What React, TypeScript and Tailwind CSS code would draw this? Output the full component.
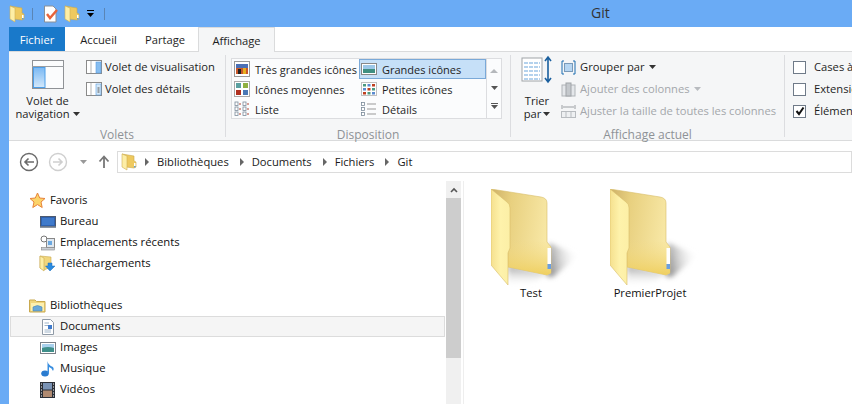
import type { ReactNode } from 'react';

const FONT = { fontFamily: '"Open Sans", "Noto Sans", sans-serif' };

function SmallFolder({ className = '' }: { className?: string }) {
  return (
    <svg width="16" height="18" viewBox="0 0 16 18" className={className}>
      <path d="M1 1 L13 3 V8 L15 9 V14 L13 15 L5 14 V3 Z" fill="#eec95f" stroke="#c9a94f" strokeWidth="0.6" />
      <path d="M1 1 L6 3 V17 L1 14 Z" fill="#fdeea6" stroke="#d0b055" strokeWidth="0.6" />
      <rect x="13" y="10" width="1.5" height="3" fill="#fff" />
      <rect x="13" y="13" width="1.5" height="1.4" fill="#5a9de0" />
    </svg>
  );
}

function BigFolder({ id }: { id: string }) {
  return (
    <svg width="90" height="100" viewBox="0 0 90 100">
      <defs>
        <linearGradient id={`${id}-back`} x1="0" x2="1" y1="0" y2="0.2">
          <stop offset="0" stopColor="#cdb068" />
          <stop offset="0.35" stopColor="#e8d07f" />
          <stop offset="1" stopColor="#f8e8a6" />
        </linearGradient>
        <linearGradient id={`${id}-bottom`} x1="0" x2="0" y1="0" y2="1">
          <stop offset="0" stopColor="#f3dc8a" stopOpacity="0" />
          <stop offset="1" stopColor="#efcf5f" />
        </linearGradient>
        <linearGradient id={`${id}-flap`} x1="0" x2="1" y1="0" y2="0">
          <stop offset="0" stopColor="#f5e08e" />
          <stop offset="0.5" stopColor="#fef2ab" />
          <stop offset="1" stopColor="#fcefa6" />
        </linearGradient>
        <linearGradient id={`${id}-shadow`} gradientUnits="userSpaceOnUse" x1="58" y1="70" x2="88" y2="64">
          <stop offset="0" stopColor="#808080" stopOpacity="0.8" />
          <stop offset="1" stopColor="#ffffff" stopOpacity="0" />
        </linearGradient>
        <linearGradient id={`${id}-under`} gradientUnits="userSpaceOnUse" x1="30" y1="78" x2="30" y2="98">
          <stop offset="0" stopColor="#8a8a8a" stopOpacity="0.7" />
          <stop offset="1" stopColor="#ffffff" stopOpacity="0" />
        </linearGradient>
        <filter id={`${id}-blur`} x="-30%" y="-30%" width="160%" height="160%">
          <feGaussianBlur stdDeviation="2.5" />
        </filter>
      </defs>
      <g filter={`url(#${id}-blur)`}>
        <path d="M58 54 L88 66 L62 88 L56 88 Z" fill={`url(#${id}-shadow)`} />
        <path d="M17 76 L58 84 L42 93 L17 98 Z" fill={`url(#${id}-under)`} />
      </g>
      <path d="M0 0 L50 8 Q56 9 56 14 V53 L60 58 V84 L56 86 L17 78 V16 Z" fill={`url(#${id}-back)`} stroke="#d9bd6a" strokeWidth="0.6" />
      <path d="M17 50 L56 53 L60 58 V84 L56 86 L17 78 Z" fill={`url(#${id}-bottom)`} />
      <path d="M0 0 L16 13 Q19 15 19 19 V59 L17 64 V96 L0 76 Z" fill={`url(#${id}-flap)`} stroke="#d9bd6a" strokeWidth="0.6" />
      <rect x="56.5" y="59" width="3.5" height="16" fill="#ffffff" />
      <rect x="56.5" y="75" width="3.5" height="5" fill="#6a9fe0" />
    </svg>
  );
}

function Caret({ color = '#333' }: { color?: string }) {
  return (
    <svg width="7" height="4" viewBox="0 0 7 4" className="inline-block shrink-0">
      <path d="M0 0 H7 L3.5 4 Z" fill={color} />
    </svg>
  );
}

function PaneIcon({ details }: { details?: boolean }) {
  return (
    <svg width="16" height="16" viewBox="0 0 16 16">
      <rect x="0.5" y="1.5" width="15" height="13" fill="#fff" stroke="#8a8a8a" />
      <line x1="5" y1="2" x2="5" y2="14" stroke="#b5b5b5" />
      <rect x="10" y="3" width="5" height="11" fill={details ? '#d5e8f8' : '#86bdf0'} stroke="#5a9de0" strokeWidth="0.6" />
      {details && <path d="M11.5 7H13.5M11.5 9H13.5M11.5 11H13.5" stroke="#555" />}
    </svg>
  );
}

// layout gallery thumbs
function GalleryIcon({ kind }: { kind: string }) {
  if (kind === 'xl')
    return (
      <svg width="16" height="16" viewBox="0 0 16 16">
        <rect x="0.5" y="0.5" width="15" height="15" fill="#fff" stroke="#999" />
        <rect x="2" y="3" width="12" height="4" fill="#4a6fb5" />
        <rect x="2" y="7" width="12" height="6" fill="#c9582a" />
        <rect x="4" y="8" width="3" height="5" fill="#222" />
        <rect x="9" y="7" width="3" height="6" fill="#e8b020" />
      </svg>
    );
  if (kind === 'l')
    return (
      <svg width="16" height="16" viewBox="0 0 16 16">
        <rect x="0.5" y="2.5" width="15" height="11" fill="#fff" stroke="#888" />
        <rect x="2" y="4" width="12" height="4" fill="#9cc7e8" />
        <rect x="2" y="8" width="12" height="4" fill="#3f8f82" />
      </svg>
    );
  if (kind === 'm')
    return (
      <svg width="16" height="16" viewBox="0 0 16 16">
        <rect x="0.5" y="0.5" width="15" height="15" fill="#fff" stroke="#aaa" />
        <rect x="2" y="2" width="5" height="5" fill="#5aa0a0" />
        <rect x="9" y="2" width="5" height="5" fill="#8fb040" />
        <rect x="2" y="9" width="5" height="5" fill="#b03020" />
        <rect x="9" y="9" width="5" height="5" fill="#4a78b5" />
      </svg>
    );
  if (kind === 's')
    return (
      <svg width="16" height="16" viewBox="0 0 16 16">
        <rect x="0.5" y="1.5" width="15" height="13" fill="#fff" stroke="#c0c0c0" />
        {[2, 6.5, 11].map((x, i) =>
          [3, 7, 11].map((y, j) => (
            <rect key={`${i}${j}`} x={x} y={y} width="3" height="2.5" fill={['#4a9a80', '#5a8ad0', '#c04020'][(i + j) % 3]} />
          )),
        )}
      </svg>
    );
  if (kind === 'd')
    return (
      <svg width="16" height="16" viewBox="0 0 16 16">
        {[1.5, 6.5, 11.5].map((y) => (
          <rect key={y} x="0.5" y={y} width="3" height="3" fill="#fff" stroke="#7a8a9a" strokeWidth="0.8" />
        ))}
        <path d="M6 3H15M6 8H15M6 13H15" stroke="#999" />
      </svg>
    );
  return (
    <svg width="16" height="16" viewBox="0 0 16 16">
      {[1, 9].map((x) =>
        [1, 6, 11].map((y) => (
          <rect key={`${x}${y}`} x={x} y={y} width="3" height="3.4" fill="#fff" stroke="#7a8a9a" strokeWidth="0.8" />
        )),
      )}
      <path d="M5 3H7M13 3H15M5 8H7M13 8H15M5 13H7M13 13H15" stroke="#b04030" />
    </svg>
  );
}

function GalleryItem({ kind, label, active }: { kind: string; label: string; active?: boolean }) {
  return (
    <div className={`flex h-[20px] items-center gap-[5px] ${active ? 'border border-[#7aa9d8] bg-[#c6e0f8] pl-[1px]' : 'pl-[2px]'}`}>
      <GalleryIcon kind={kind} />
      <span className="whitespace-nowrap">{label}</span>
    </div>
  );
}

function RibbonGroup({ width, label, children }: { width: string; label: string; children: ReactNode }) {
  return (
    <div className={`flex h-full shrink-0 flex-col border-r border-[#dcdde0] ${width}`}>
      <div className="h-[73px] shrink-0">{children}</div>
      <div className="text-center text-[12px] leading-[14px] text-[#8e9296]">{label}</div>
    </div>
  );
}

function Check({ checked, label }: { checked?: boolean; label: string }) {
  return (
    <div className="flex h-[22px] items-center gap-[8px]">
      <span className="flex h-[13px] w-[13px] shrink-0 items-center justify-center border border-[#6f7a88] bg-white">
        {checked && (
          <svg width="10" height="10" viewBox="0 0 10 10">
            <path d="M1.5 5 L4 8 L8.5 1.5" fill="none" stroke="#111" strokeWidth="2" />
          </svg>
        )}
      </span>
      <span className="whitespace-nowrap">{label}</span>
    </div>
  );
}

function Crumb({ label }: { label: string }) {
  return (
    <>
      <span className="ml-[11px] h-0 w-0 border-y-[4px] border-l-[4px] border-y-transparent border-l-[#666]" />
      <span className="ml-[8px] whitespace-nowrap">{label}</span>
    </>
  );
}

function NavIcon({ kind }: { kind: string }) {
  switch (kind) {
    case 'star':
      return (
        <svg width="17" height="17" viewBox="0 0 17 17">
          <path d="M8.5 1 L10.7 6 L16 6.5 L12 10 L13.2 15.5 L8.5 12.6 L3.8 15.5 L5 10 L1 6.5 L6.3 6 Z" fill="#fbd46a" stroke="#e8833a" />
        </svg>
      );
    case 'desktop':
      return (
        <svg width="16" height="14" viewBox="0 0 16 14">
          <rect x="0.5" y="1.5" width="15" height="10" fill="#2f62b0" stroke="#4d5a70" />
          <rect x="2" y="3" width="12" height="7" fill="#3f7acb" />
          <rect x="0" y="11.5" width="16" height="1.5" fill="#8a94a2" />
        </svg>
      );
    case 'recent':
      return (
        <svg width="16" height="16" viewBox="0 0 16 16">
          <circle cx="4" cy="4" r="3" fill="#fff" stroke="#777" />
          <rect x="6.5" y="3.5" width="8" height="9" fill="#dfe7ef" stroke="#888" />
          <rect x="8" y="6" width="4" height="4" fill="#6aa8e0" />
          <rect x="1.5" y="12.5" width="13" height="2.5" fill="#c9ced4" stroke="#888" strokeWidth="0.6" />
        </svg>
      );
    case 'download':
      return (
        <svg width="17" height="17" viewBox="0 0 17 17">
          <path d="M1 1 L12 2 V12 L5 15 L1 13 Z" fill="#f1d67c" stroke="#c9a94f" strokeWidth="0.6" />
          <path d="M1 1 L5 3 V16 L1 13 Z" fill="#fdeea6" stroke="#c9a94f" strokeWidth="0.6" />
          <path d="M9 8 H13 V11 H16 L11 16 L6.5 11 H9 Z" fill="#2a8ae0" stroke="#1c6cb8" strokeWidth="0.5" />
        </svg>
      );
    case 'library':
      return (
        <svg width="17" height="15" viewBox="0 0 17 15">
          <path d="M0.5 2 H6 L7.5 3.5 H16 V14 H0.5 Z" fill="#f1d67c" stroke="#c9a94f" />
          <rect x="2" y="5" width="13" height="8" fill="#fdf0b0" />
          <path d="M4 13 V9 Q8.5 6 13 9 V13 Z" fill="#6aa8d8" stroke="#4a86b8" strokeWidth="0.6" />
        </svg>
      );
    case 'doc':
      return (
        <svg width="14" height="16" viewBox="0 0 14 16">
          <path d="M1.5 0.5 H9.5 L12.5 3.5 V15.5 H1.5 Z" fill="#fff" stroke="#8f9aa6" />
          <path d="M3.5 4H8M3.5 6.5H10M3.5 11H10M3.5 13H10" stroke="#9fb4c8" />
          <rect x="7" y="6" width="4" height="4" fill="#3f7acb" />
        </svg>
      );
    case 'img':
      return (
        <svg width="16" height="14" viewBox="0 0 16 14">
          <rect x="0.5" y="1.5" width="15" height="11" fill="#fff" stroke="#7a8088" />
          <rect x="2" y="3" width="12" height="4" fill="#a8d0ec" />
          <path d="M2 7 Q8 5 14 7 V11 H2 Z" fill="#3f8f8a" />
        </svg>
      );
    case 'music':
      return (
        <svg width="14" height="17" viewBox="0 0 14 17">
          <ellipse cx="4" cy="13.5" rx="3.8" ry="3" fill="#2a7cd0" />
          <path d="M6.5 13 V1 Q7 5 12 7 Q13.5 9 12 11 Q11 8 8 7 V13.5 Z" fill="#3a8fe0" />
        </svg>
      );
    default:
      return (
        <svg width="15" height="16" viewBox="0 0 15 16">
          <rect x="0" y="0" width="15" height="16" fill="#2b2f36" />
          <rect x="3" y="1" width="9" height="6.5" fill="#7a93b5" />
          <rect x="3" y="8.5" width="9" height="6.5" fill="#b08a70" />
          <path d="M1 2H2M1 5H2M1 8H2M1 11H2M1 14H2M13 2H14M13 5H14M13 8H14M13 11H14M13 14H14" stroke="#fff" />
        </svg>
      );
  }
}

function NavRow({ kind, label, indent, active }: { kind: string; label: string; indent?: boolean; active?: boolean }) {
  return (
    <div
      className={`flex h-[21px] items-center whitespace-nowrap ${active ? 'border border-[#dcdcdc] bg-[#f5f5f5]' : ''} ${indent ? (active ? 'pl-[28px]' : 'pl-[29px]') : 'pl-[19px]'}`}
    >
      <span className="mr-[4px] flex w-[17px] shrink-0 items-center justify-center">
        <NavIcon kind={kind} />
      </span>
      <span>{label}</span>
    </div>
  );
}

export default function App() {
  return (
    <div style={FONT} className="flex h-[404px] w-[852px] flex-col overflow-hidden bg-[#6aabf5] text-[11.2px] text-[#1e1e1e]">
      {/* title bar */}
      <div className="flex h-[27px] shrink-0 items-center pl-[9px]">
        <SmallFolder />
        <span className="ml-[7px] h-[12px] w-px bg-[#5a85b5]" />
        <svg width="16" height="18" viewBox="0 0 16 18" className="ml-[10px]">
          <path d="M1.5 1 H10 L13 4 V17 H1.5 Z" fill="#fff" stroke="#8a8f96" />
          <path d="M4 9 L7 13 L14 5" fill="none" stroke="#e8633a" strokeWidth="2.4" />
        </svg>
        <SmallFolder className="ml-[5px]" />
        <span className="ml-[5px] flex w-[10px] flex-col items-center gap-[2px]">
          <span className="h-[1px] w-[7px] bg-black" />
          <Caret color="#000" />
        </span>
        <span className="ml-[9px] h-[12px] w-px bg-[#5a85b5]" />
        <span className="ml-[486px] -mt-[3px] text-[14px] text-[#333]">Git</span>
      </div>

      <div className="ml-[9px] flex min-h-0 flex-1 flex-col bg-white">
        {/* tabs */}
        <div className="flex h-[24px] shrink-0 items-stretch">
          <div className="flex w-[56px] items-center justify-center bg-[#1979ca] pt-[3px] text-white">Fichier</div>
          <div className="flex w-[67px] items-center justify-center pt-[3px]">Accueil</div>
          <div className="flex w-[66px] items-center justify-center pt-[3px]">Partage</div>
          <div className="z-10 -mb-px flex w-[77px] items-center justify-center border border-b-0 border-[#dadbdc] bg-[#f5f6f7] pt-[3px]">Affichage</div>
        </div>

        {/* ribbon */}
        <div className="flex h-[90px] shrink-0 border-y border-[#dadbdc] bg-[#f5f6f7] py-[3px]">
          <RibbonGroup width="w-[217px]" label="Volets">
            <div className="flex">
              <div className="flex w-[77px] flex-col items-center pt-[5px] leading-[13px]">
                <svg width="32" height="30" viewBox="0 0 32 30">
                  <rect x="0.5" y="0.5" width="31" height="28" fill="#fbfcfd" stroke="#8f9296" />
                  <line x1="0" y1="6.5" x2="32" y2="6.5" stroke="#9a9da1" />
                  <defs>
                    <linearGradient id="navpane" x1="0" x2="0" y1="0" y2="1">
                      <stop offset="0" stopColor="#7ab8f3" />
                      <stop offset="1" stopColor="#d4e9fb" />
                    </linearGradient>
                  </defs>
                  <rect x="1.5" y="7.5" width="11.5" height="20" fill="url(#navpane)" stroke="#4d9ee8" />
                </svg>
                <span className="mt-[4px]">Volet de</span>
                <span className="flex items-center gap-[3px]">
                  navigation <Caret />
                </span>
              </div>
              <div className="flex flex-col gap-[2px] pt-[2px]">
                <div className="flex h-[20px] items-center gap-[3px] whitespace-nowrap">
                  <PaneIcon /> Volet de visualisation
                </div>
                <div className="flex h-[20px] items-center gap-[3px] whitespace-nowrap">
                  <PaneIcon details /> Volet des détails
                </div>
              </div>
            </div>
          </RibbonGroup>

          <RibbonGroup width="w-[285px]" label="Disposition">
            <div className="ml-[5px] mt-[3px] flex h-[61px] w-[271px] border border-[#dcdde0] bg-[#fbfcfd] text-[11px]">
              <div className="grid w-[254px] grid-cols-[127px_127px] leading-none">
                <GalleryItem kind="xl" label="Très grandes icônes" />
                <GalleryItem kind="l" label="Grandes icônes" active />
                <GalleryItem kind="m" label="Icônes moyennes" />
                <GalleryItem kind="s" label="Petites icônes" />
                <GalleryItem kind="list" label="Liste" />
                <GalleryItem kind="d" label="Détails" />
              </div>
              <div className="flex flex-1 flex-col items-center justify-around border-l border-[#dcdde0] py-[3px]">
                <span className="h-0 w-0 border-x-[4px] border-b-[4px] border-x-transparent border-b-[#b5b8bc]" />
                <Caret color="#555" />
                <span className="flex flex-col items-center gap-[1px]">
                  <span className="h-px w-[7px] bg-[#555]" />
                  <Caret color="#555" />
                </span>
              </div>
            </div>
          </RibbonGroup>

          <RibbonGroup width="w-[274px]" label="Affichage actuel">
            <div className="flex pl-[10px]">
              <div className="flex w-[32px] shrink-0 flex-col items-center leading-[13px]">
                <svg width="32" height="30" viewBox="0 0 32 30">
                  <rect x="1" y="3" width="20" height="23" fill="#fff" stroke="#a0a4a8" />
                  <path d="M3 8H19M3 12H19M3 16H19M3 20H19M3 24H19" stroke="#9cc4e8" strokeWidth="1.6" strokeDasharray="4 1" />
                  <path d="M27 2 V27 M24 6 L27 2 L30 6 M24 23 L27 27 L30 23" fill="none" stroke="#1a5f9e" strokeWidth="1.6" />
                </svg>
                <span className="mt-[9px]">Trier</span>
                <span className="flex items-center gap-[2px]">
                  par <Caret />
                </span>
              </div>
              <div className="ml-[8px] flex flex-col pt-[1px] whitespace-nowrap">
                <div className="flex h-[22px] items-center gap-[4px]">
                  <svg width="15" height="15" viewBox="0 0 15 15">
                    <path d="M3 1H1V14H3M12 1H14V14H12" fill="none" stroke="#1a6cb0" />
                    <rect x="3.5" y="3.5" width="8" height="8" fill="#b6d6f2" stroke="#7a9ab8" />
                  </svg>
                  Grouper par <Caret />
                </div>
                <div className="flex h-[22px] items-center gap-[4px] text-[#a4a7ab]">
                  <svg width="15" height="15" viewBox="0 0 15 15">
                    <rect x="1" y="3" width="13" height="11" fill="#e4e7ea" stroke="#b0b4b8" />
                    <rect x="5" y="1" width="5" height="13" fill="#c4c8cc" stroke="#a0a4a8" />
                  </svg>
                  Ajouter des colonnes <Caret color="#b8bbbf" />
                </div>
                <div className="flex h-[22px] items-center gap-[4px] text-[#a4a7ab]">
                  <svg width="15" height="15" viewBox="0 0 15 15">
                    <path d="M1 1V5M14 1V5M2 3H13" stroke="#9a9ea2" />
                    <rect x="0.5" y="7.5" width="14" height="6" fill="#eef0f2" stroke="#b8bcc0" />
                    <path d="M5 8V13M10 8V13" stroke="#b8bcc0" />
                  </svg>
                  Ajuster la taille de toutes les colonnes
                </div>
              </div>
            </div>
          </RibbonGroup>

          <div className="min-w-0 flex-1 overflow-hidden pl-[8px] pt-[1px]">
            <Check label="Cases à cocher" />
            <Check label="Extensions de noms" />
            <Check label="Éléments masqués" checked />
          </div>
        </div>

        {/* address row */}
        <div className="flex h-[40px] shrink-0 items-center pl-[10px] pt-[2px]">
          <svg width="20" height="20" viewBox="0 0 20 20">
            <circle cx="10" cy="10" r="8.5" fill="#fff" stroke="#6a6a6a" strokeWidth="1.4" />
            <path d="M15 10H6M9.5 6.5L6 10L9.5 13.5" fill="none" stroke="#6a6a6a" strokeWidth="1.6" />
          </svg>
          <svg width="20" height="20" viewBox="0 0 20 20" className="ml-[9px]">
            <circle cx="10" cy="10" r="8.5" fill="#fff" stroke="#cfcfcf" strokeWidth="1.4" />
            <path d="M5 10H14M10.5 6.5L14 10L10.5 13.5" fill="none" stroke="#cfcfcf" strokeWidth="1.6" />
          </svg>
          <span className="ml-[12px] flex w-[8px]">
            <Caret color="#999" />
          </span>
          <svg width="12" height="14" viewBox="0 0 12 14" className="ml-[10px]">
            <path d="M6 13V2M1.5 6.5L6 1.5L10.5 6.5" fill="none" stroke="#777" strokeWidth="1.8" />
          </svg>
          <div className="ml-[7px] flex h-[22px] flex-1 items-center border border-[#dcdcdc] pl-[3px] text-[#1a1a1a]">
            <SmallFolder className="-mr-[3px]" />
            <Crumb label="Bibliothèques" />
            <Crumb label="Documents" />
            <Crumb label="Fichiers" />
            <Crumb label="Git" />
          </div>
        </div>

        {/* panes */}
        <div className="flex min-h-0 flex-1">
          <div className="w-[436px] shrink-0 pl-px pt-[9px] text-[11.3px] text-[#111]">
            <NavRow kind="star" label="Favoris" />
            <NavRow kind="desktop" label="Bureau" indent />
            <NavRow kind="recent" label="Emplacements récents" indent />
            <NavRow kind="download" label="Téléchargements" indent />
            <div className="h-[21px]" />
            <NavRow kind="library" label="Bibliothèques" />
            <NavRow kind="doc" label="Documents" indent active />
            <NavRow kind="img" label="Images" indent />
            <NavRow kind="music" label="Musique" indent />
            <NavRow kind="video" label="Vidéos" indent />
          </div>
          <div className="ml-px flex w-[15px] shrink-0 flex-col">
            <div className="flex h-[17px] items-center justify-center bg-[#f0f0f0]">
              <svg width="8" height="6" viewBox="0 0 8 6">
                <path d="M1 5L4 2L7 5" fill="none" stroke="#555" strokeWidth="1.6" />
              </svg>
            </div>
            <div className="h-[160px] bg-[#cdcdcd]" />
            <div className="flex-1 bg-[#f0f0f0]" />
          </div>
          <div className="ml-[2px] flex flex-1 border-l border-[#eeeeee] pl-[27px] pt-[8px] text-[#111]">
            <div className="flex w-[119px] flex-col">
              <BigFolder id="f1" />
              <span className="-mt-[4px] w-[80px] text-center">Test</span>
            </div>
            <div className="flex flex-col">
              <BigFolder id="f2" />
              <span className="-mt-[4px] -ml-[18px] w-[116px] text-center">PremierProjet</span>
            </div>
          </div>
        </div>
      </div>
    </div>
  );
}
